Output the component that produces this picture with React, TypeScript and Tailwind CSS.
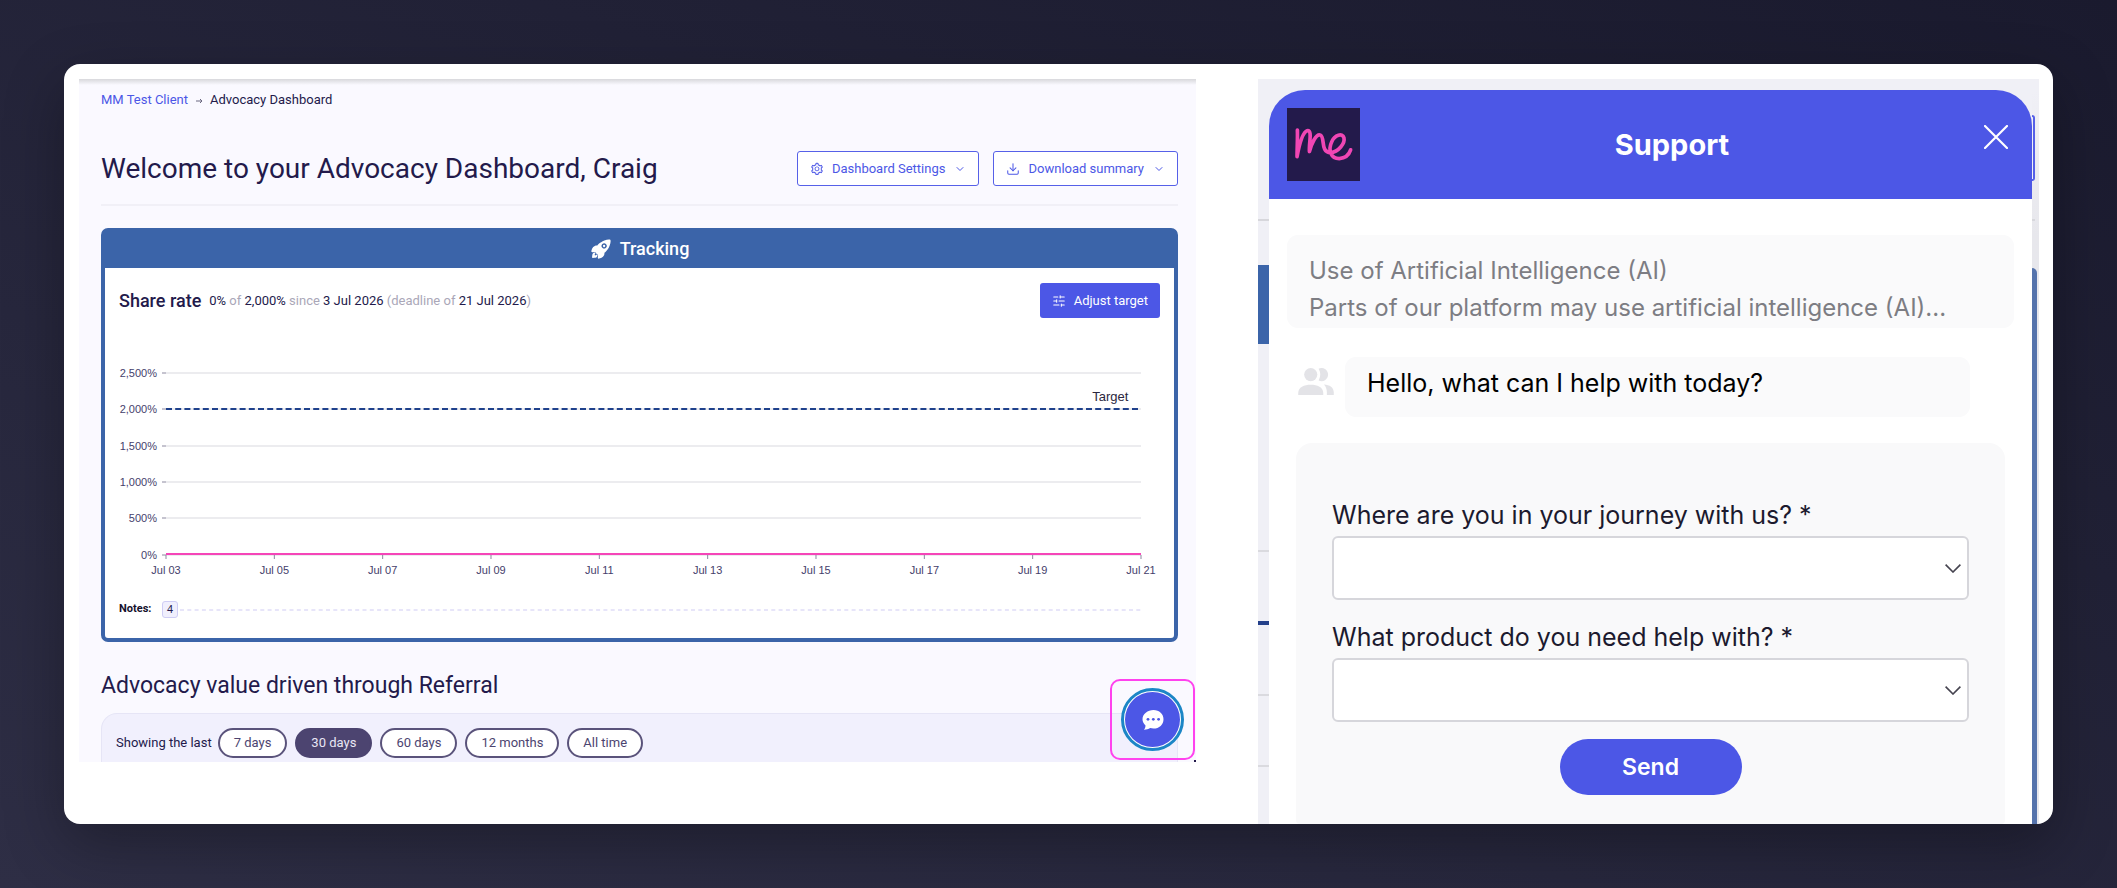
import { ChevronDown, Download, SlidersHorizontal } from "lucide-react";
import { AiOutlineSetting } from "react-icons/ai";
import { IoRocket } from "react-icons/io5";

const yTicks = ["2,500%", "2,000%", "1,500%", "1,000%", "500%", "0%"];
const xTicks = ["03", "05", "07", "09", "11", "13", "15", "17", "19", "21"];
const ranges = ["7 days", "30 days", "60 days", "12 months", "All time"];

const rowY = (i: number) => 6 + Math.round(i * 36.3);

function ShareRateChart() {
    return (
        <svg className="w-full h-[212px] overflow-visible font-['Liberation_Sans',sans-serif] text-[11px]">
            {/* GRID + Y AXIS */}
            {yTicks.map((label, i) => (
                <g key={label}>
                    <line x1="0" x2="100%" y1={rowY(i)} y2={rowY(i)} stroke="#e6e6ea" strokeWidth="1.5" />
                    <line x1="-4" x2="0" y1={rowY(i)} y2={rowY(i)} stroke="#8b889f" />
                    <text x="-9" y={rowY(i) + 4} textAnchor="end" fill="#453e6b">{label}</text>
                </g>
            ))}

            {/* X AXIS */}
            {xTicks.map((day, i) => {
                const x = `${(i / (xTicks.length - 1)) * 100}%`;
                return (
                    <g key={day}>
                        <line x1={x} x2={x} y1="188" y2="192" stroke="#8b889f" />
                        <text x={x} y="207" textAnchor="middle" fill="#453e6b">Jul {day}</text>
                    </g>
                );
            })}

            {/* SERIES */}
            <line x1="0" x2="100%" y1="42" y2="42" stroke="#1f418c" strokeWidth="2" strokeDasharray="6 3.2" />
            <line x1="0" x2="100%" y1="187" y2="187" stroke="#f545b8" strokeWidth="2" />
            <text x="98.7%" y="34" textAnchor="end" fill="#2b2740" className="text-[13px]">Target</text>
        </svg>
    );
}

function Dashboard() {
    return (
        <section className="relative self-start overflow-hidden bg-[#faf9ff] pl-[22px] pr-[18px] pt-[13px] font-[Roboto,sans-serif] text-[#231a4b]">
            <div className="absolute inset-x-0 top-0 h-[6px] bg-gradient-to-b from-[#d8d8dc] to-[#faf9ff]"></div>

            {/* BREADCRUMB */}
            <nav className="flex items-center text-[13px] leading-4">
                <a href="#" className="text-[#4c57e6]">MM Test Client</a>
                <svg viewBox="0 0 8 8" className="mx-[7px] mt-[2px] size-2 fill-none stroke-[#6b6880]">
                    <path d="M1 4h6M5 2l2 2-2 2" />
                </svg>
                <span>Advocacy Dashboard</span>
            </nav>

            {/* HEADING */}
            <div className="mt-[43px] flex items-center border-b-2 border-[#f1f0f7] pb-[18px]">
                <h1 className="text-[28px] leading-[35px]">
                    Welcome to your Advocacy Dashboard, Craig
                </h1>
                <button className="ml-auto flex h-[35px] items-center gap-2 rounded-[3px] border border-[#5660e8] bg-white px-3 text-[13px] text-[#4c57e6]">
                    <AiOutlineSetting className="size-[14px]" />
                    Dashboard Settings
                    <ChevronDown className="ml-px size-3" />
                </button>
                <button className="ml-[14px] flex h-[35px] items-center gap-2 rounded-[3px] border border-[#5660e8] bg-white px-3 text-[13px] text-[#4c57e6]">
                    <Download className="size-[14px]" strokeWidth={1.75} />
                    Download summary
                    <ChevronDown className="ml-px size-3" />
                </button>
            </div>

            {/* TRACKING */}
            <div className="mt-[22px] rounded-[7px] border-4 border-[#3b64a9] bg-white">
                <div className="flex h-9 items-center justify-center gap-2 bg-[#3b64a9] pb-[2px] text-lg font-medium text-white">
                    <IoRocket className="size-[22px]" />
                    Tracking
                </div>

                <div className="px-[14px] pb-5 pt-[15px]">
                    <div className="flex items-center">
                        <h3 className="text-lg font-medium">Share rate</h3>
                        <p className="ml-2 text-[13px] text-[#aaa7b8]">
                            <span className="text-[#231a4b]">0%</span> of{" "}
                            <span className="text-[#231a4b]">2,000%</span> since{" "}
                            <span className="text-[#231a4b]">3 Jul 2026</span> (deadline of{" "}
                            <span className="text-[#231a4b]">21 Jul 2026</span>)
                        </p>
                        <button className="ml-auto flex h-[35px] items-center gap-2 rounded-[3px] bg-[#4c57e6] px-3 text-[13px] text-white">
                            <SlidersHorizontal className="size-[14px]" strokeWidth={1.75} />
                            Adjust target
                        </button>
                    </div>

                    <div className="mt-[49px] flex pl-[47px] pr-[19px]">
                        <ShareRateChart />
                    </div>

                    <div className="mt-[22px] flex h-[17px] items-center pr-[19px] font-['Liberation_Sans',sans-serif]">
                        <span className="w-[43px] text-[11px] font-bold text-[#14102b] font-[Roboto,sans-serif]">Notes:</span>
                        <button className="h-[17px] w-4 rounded-[3px] border border-[#cfcdf5] bg-[#f0effd] text-[11px] leading-[15px]">4</button>
                        <svg className="ml-[2px] h-[2px] flex-1">
                            <line x1="0" x2="100%" y1="1" y2="1" stroke="#cfcbf3" strokeDasharray="4 3.3" />
                        </svg>
                    </div>
                </div>
            </div>

            {/* REFERRAL */}
            <h2 className="mt-[30px] text-[23px] leading-7">Advocacy value driven through Referral</h2>
            <div className="mt-[13px] flex items-center gap-[6px] rounded-t-2xl border border-b-0 border-[#e6e5f6] bg-[#f1f0fd] pb-1 pl-[14px] pt-[14px] text-[13px]">
                <span>Showing the last</span>
                <div className="flex gap-2">
                    {ranges.map((range) => (
                        <button
                            key={range}
                            className={
                                range === "30 days"
                                    ? "h-[30px] rounded-full border-2 border-[#4c4470] bg-[#4c4470] px-[14px] text-[#e9e7f5]"
                                    : "h-[30px] rounded-full border-2 border-[#5a537b] bg-white px-[14px] text-[#4c4470]"
                            }
                        >
                            {range}
                        </button>
                    ))}
                </div>
            </div>

            {/* CHAT LAUNCHER */}
            <div className="absolute bottom-[2px] right-px flex h-[81px] w-[85px] items-center justify-center rounded-[10px] border-2 border-[#ff42ee]">
                <button aria-label="Open chat" className="flex size-[63px] items-center justify-center rounded-full border-[3px] border-[#1c86c6] bg-white p-px">
                    <span className="flex size-full items-center justify-center rounded-full bg-[#4c57e6]">
                        <svg viewBox="0 0 22 20" className="h-5 w-[22px]">
                            <path d="M11.500 0C17.300 0 21.500 4 21.500 9.200S17.300 18.600 11.500 18.600c-1.200 0-2.300-.2-3.300-.5C6.300 19.300 4 19.900 2 19.800c1-1.400 1.500-3 1.500-4.400C1.600 13.700.5 11.600.5 9.200.5 4 5.700 0 11.500 0z" fill="#fff" />
                            <circle cx="6" cy="9.300" r="1.400" fill="#4c57e6" />
                            <circle cx="11.300" cy="9.300" r="1.400" fill="#4c57e6" />
                            <circle cx="16.600" cy="9.300" r="1.400" fill="#4c57e6" />
                        </svg>
                    </span>
                </button>
            </div>
            <div className="absolute bottom-0 right-0 size-[2px] bg-[#231a4b]"></div>
        </section>
    );
}

function Question({ id, label }: { id: string; label: string }) {
    return (
        <div>
            <label htmlFor={id} className="block text-[25px] leading-[30px] text-[#1c1a2e]">{label}</label>
            <div className="relative mt-[6px]">
                <select id={id} className="h-16 w-full appearance-none rounded-md border-2 border-[#d6d6db] bg-white px-4 text-[25px]">
                    <option></option>
                </select>
                <svg viewBox="0 0 16 9" className="pointer-events-none absolute right-2 top-7 h-[9px] w-4 fill-none stroke-[#45434f]" strokeWidth="1.6">
                    <path d="M.6.600 8 8 15.400.6" />
                </svg>
            </div>
        </div>
    );
}

function SupportChat() {
    return (
        <section className="flex bg-[#f0f0f6] pt-[11px] font-[Inter,sans-serif]">
            {/* PAGE BEHIND, LEFT EDGE */}
            <div className="w-[11px] shrink-0 pt-[129px]">
                <div className="h-[2px] bg-[#d7d7dc]"></div>
                <div className="mt-11 h-[79px] bg-[#3b64a9]"></div>
                <div className="mt-[206px] h-[2px] bg-[#dadadf]"></div>
                <div className="mt-[69px] h-1 bg-[#24408a]"></div>
                <div className="mt-[69px] h-[2px] bg-[#dadadf]"></div>
                <div className="mt-[69px] h-[2px] bg-[#dadadf]"></div>
            </div>

            <div className="min-w-0 flex-1">
                <header className="flex h-[109px] rounded-t-[36px] bg-[#4c57e6] px-[18px] pr-6 pt-[18px]">
                    <svg viewBox="0 0 218 218" className="size-[73px] shrink-0 bg-[#231a4b]">
                        <path
                            d="M31 66c1 27-1 54-1 79 6-32 16-72 30-77 17-3 5 36 7 62 6-24 20-54 33-49 14 6-1 52 30 52 24-1 44-28 40-44-4-16-28-8-36 11-13 27-2 51 22 51 16-1 29-11 34-26"
                            fill="none" stroke="#f046b4" strokeWidth="11" strokeLinecap="round" strokeLinejoin="round"
                        />
                    </svg>
                    <h2 className="flex-1 text-center text-[29px] font-bold leading-[74px] text-white">Support</h2>
                    <button aria-label="Close" className="mt-[17px] size-6 shrink-0 text-white">
                        <svg viewBox="0 0 24 24" className="size-6 fill-none stroke-current" strokeWidth="2.2" strokeLinecap="round">
                            <path d="M1 1l22 22M23 1L1 23" />
                        </svg>
                    </button>
                </header>

                <div className="bg-white px-[18px] pt-9">
                    <p className="h-[93px] overflow-hidden rounded-[11px] bg-[#fafafb] px-[22px] pt-[17px] text-2xl leading-[37px] text-[#7d7d83]">
                        Use of Artificial Intelligence (AI)<br />
                        Parts of our platform may use artificial intelligence (AI)...
                    </p>

                    <div className="mt-[29px] flex pl-[11px] pr-11">
                        <svg viewBox="0 0 108 82" className="mt-[11px] h-[27px] w-9 shrink-0 fill-[#e3e3e7]">
                            <circle cx="38" cy="20" r="20" />
                            <path d="M62 2a20 20 0 1 1 0 36q10-18 0-36z" />
                            <path d="M0 82v-6c0-18 18-25 38-25s38 7 38 25v6z" />
                            <path d="M78 50c18 1 30 9 30 24v8H87v-8c0-10-3-18-9-24z" />
                        </svg>
                        <p className="ml-[11px] flex-1 rounded-[11px] bg-[#fafafb] px-[22px] pb-4 pt-[9px] text-[25px] leading-[35px] text-black">
                            Hello, what can I help with today?
                        </p>
                    </div>

                    <form className="mx-[9px] mt-[26px] rounded-t-2xl rounded-b bg-[#f9f9fa] px-9 pb-[29px] pt-[57px]">
                        <Question id="journey" label="Where are you in your journey with us? *" />
                        <div className="mt-[22px]">
                            <Question id="product" label="What product do you need help with? *" />
                        </div>
                        <button type="button" className="mx-auto mt-[17px] block h-14 w-[182px] rounded-full bg-[#4c57e6] text-[23px] font-semibold text-white">
                            Send
                        </button>
                    </form>
                </div>
            </div>

            {/* PAGE BEHIND, RIGHT EDGE */}
            <div className="flex w-[7px] shrink-0 flex-col bg-gradient-to-b from-[#f0f0f6] to-[#e7e7ec] to-20% pt-[25px]">
                <div className="h-[66px] w-[3px] rounded-r border-2 border-l-0 border-[#5660e8] bg-[#f0f0f6]"></div>
                <div className="mt-[38px] h-[2px] w-[3px] bg-[#d7d7dc]"></div>
                <div className="mt-[47px] w-[5px] flex-1 rounded-tr-[5px] bg-[#5573ac]"></div>
            </div>
        </section>
    );
}

export default function App() {
    return (
        <main className="min-h-screen bg-[linear-gradient(200deg,#1a1a2e,#2e2e45)] p-16">
            <div className="grid grid-cols-[1117fr_781fr] gap-[62px] overflow-hidden rounded-2xl bg-white pl-[15px] pr-[14px] pt-[15px] shadow-[0_20px_60px_rgba(0,0,0,0.3)]">
                <Dashboard />
                <SupportChat />
            </div>
        </main>
    );
}
